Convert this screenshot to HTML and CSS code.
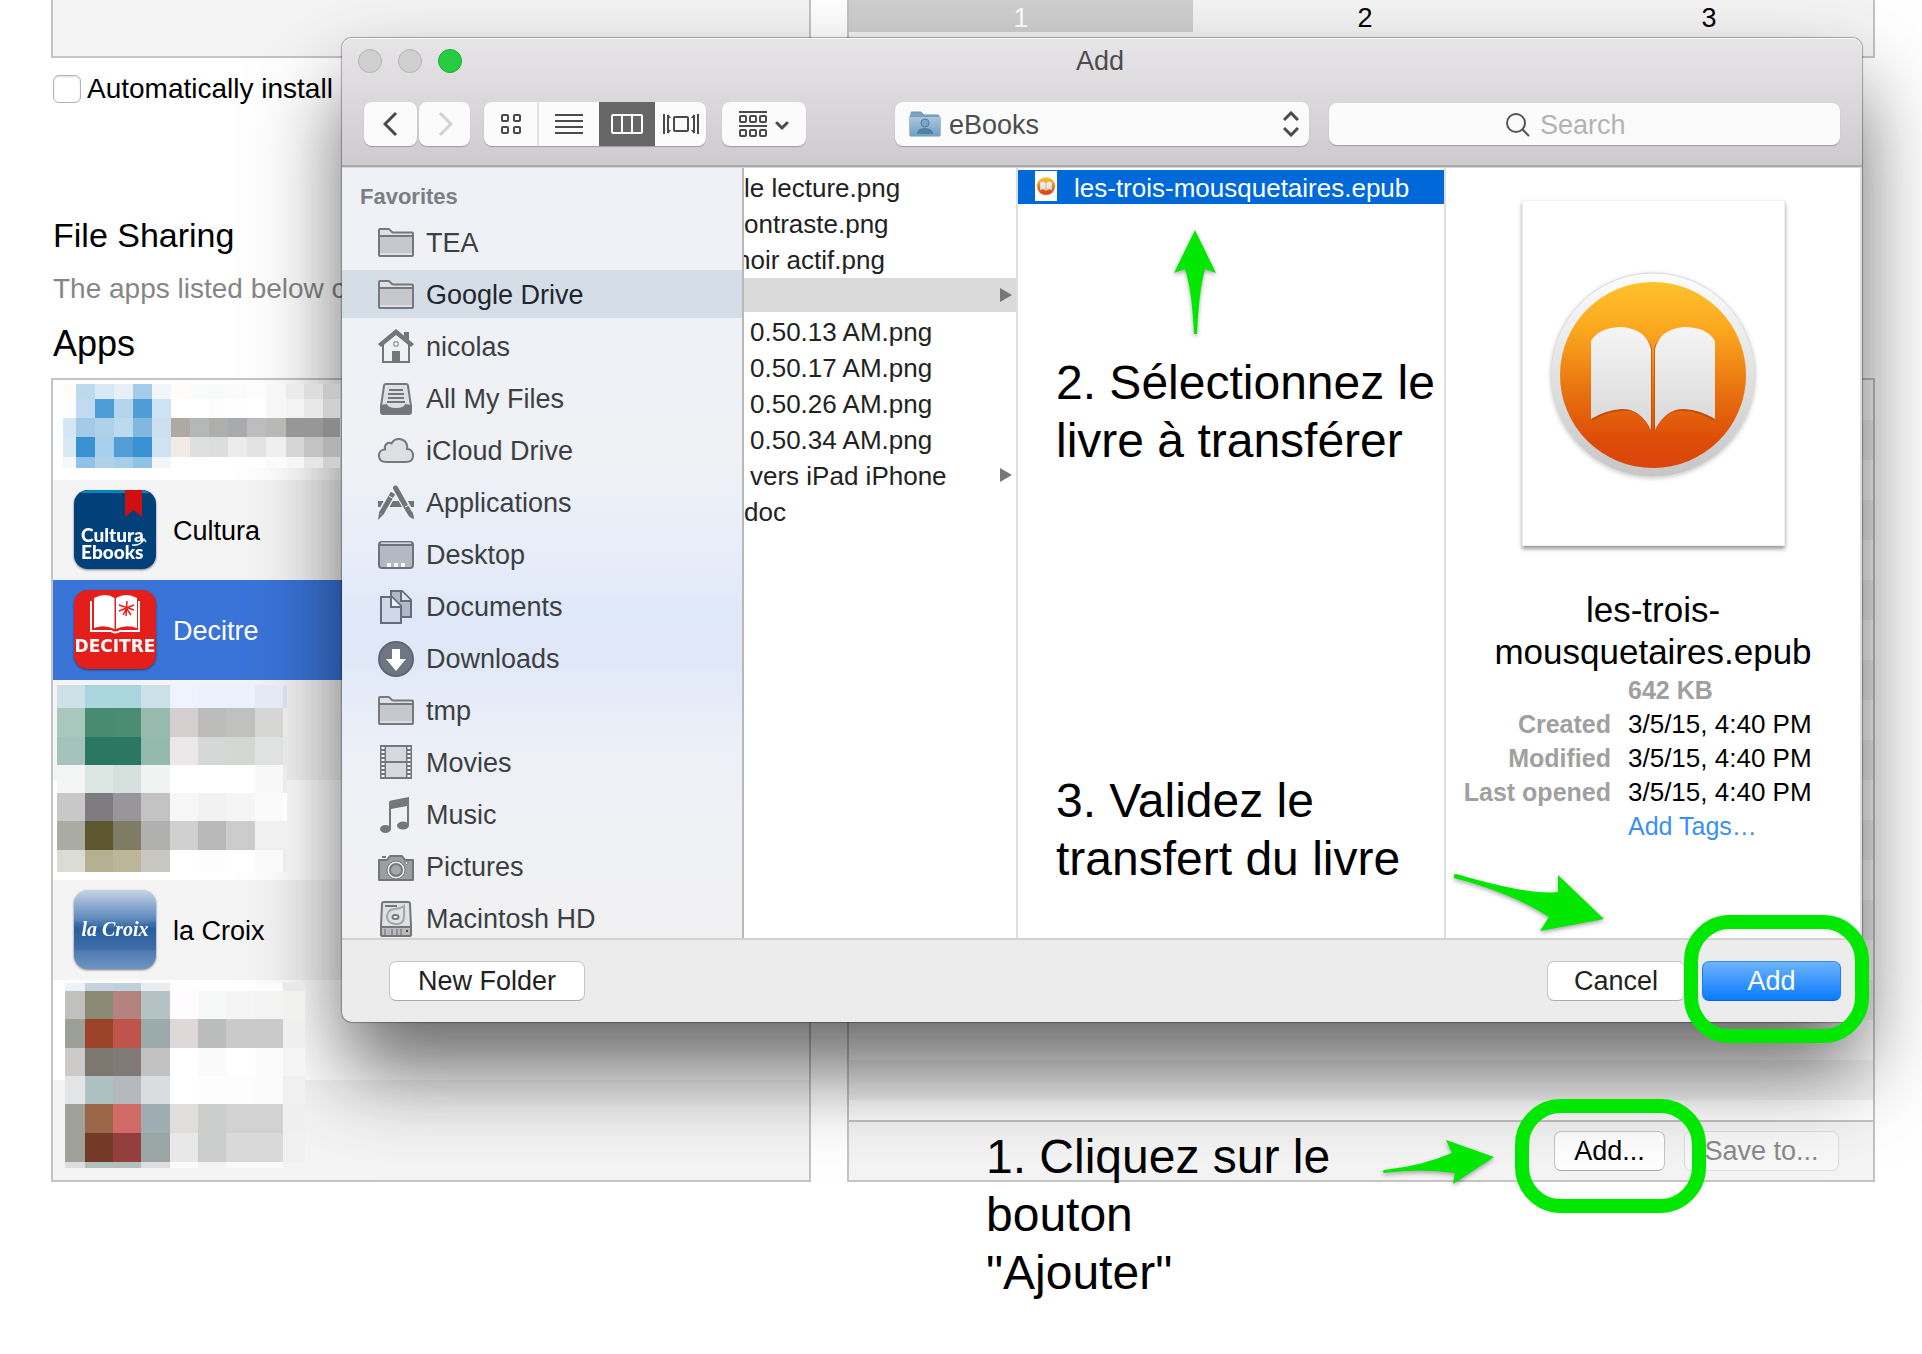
FILE: index.html
```html
<!DOCTYPE html>
<html lang="fr">
<head>
<meta charset="utf-8">
<title>Add</title>
<link rel="stylesheet" href="styles.css">
</head>
<body>
<svg class="defs" aria-hidden="true">
  <defs>
    <linearGradient id="orange" x1="0" y1="0" x2="0" y2="1"><stop offset="0" stop-color="#ffc22c"/><stop offset=".25" stop-color="#fba81f"/><stop offset=".6" stop-color="#e8700f"/><stop offset=".85" stop-color="#dd4c08"/><stop offset="1" stop-color="#db450b"/></linearGradient>
    <linearGradient id="rim" x1="0" y1="0" x2="0" y2="1"><stop offset="0" stop-color="#fdfdfd"/><stop offset="1" stop-color="#c6c6c6"/></linearGradient>
    <linearGradient id="paper" x1="0" y1="0" x2="0" y2="1"><stop offset="0" stop-color="#f5f5f5"/><stop offset="1" stop-color="#d8d8d8"/></linearGradient>
    <linearGradient id="folderblue" x1="0" y1="0" x2="0" y2="1"><stop offset="0" stop-color="#a9c6da"/><stop offset="1" stop-color="#6f9fc4"/></linearGradient>
    <linearGradient id="croix" x1="0" y1="0" x2="0" y2="1"><stop offset="0" stop-color="#c5d4e8"/><stop offset=".36" stop-color="#5f8abd"/><stop offset=".5" stop-color="#2d629f"/><stop offset=".7" stop-color="#4673ab"/><stop offset="1" stop-color="#6d95c4"/></linearGradient>
    <symbol id="book" viewBox="0 0 210 210">
      <circle cx="105" cy="105" r="102" fill="url(#rim)" stroke="#dcdcdc" stroke-width="1"/>
      <circle cx="105" cy="105" r="93" fill="url(#orange)"/>
      <g fill="#a33a06" opacity=".5"><path d="M44 73Q52 59 75 59Q98 61 104 78V162Q92 138 73 141Q58 142 44 151Z"/><path d="M166 73Q158 59 135 59Q112 61 106 78V162Q118 138 137 141Q152 142 166 151Z"/></g>
      <g fill="url(#paper)"><path d="M43 71Q51 57 74 57Q98 59 103 79V160Q92 138 73 139Q58 140 43 149Z"/><path d="M167 71Q159 57 136 57Q112 59 107 79V160Q118 138 137 139Q152 140 167 149Z"/></g>
    </symbol>
    <symbol id="folder" viewBox="0 0 36 36"><path class="line" d="M1 30V5q0-1 1-1h8.500q1 0 2 1.500T15 7.500h19q1 0 1 1V30q0 1-1 1H2q-1 0-1-1z"/><path class="face" d="M2 12h32v16H2z"/><path class="line nofill" d="M1 11h34"/></symbol>
  </defs>
</svg>

<main class="page">
  <div class="columns top">
    <section class="box apps-top"></section>
    <section class="box screens"><span class="current">1</span><span>2</span><span>3</span></section>
  </div>
  <label class="auto"><input type="checkbox"> Automatically install</label>
  <h1 class="title">File Sharing</h1>
  <p class="hint">The apps listed below can</p>
  <h2 class="subtitle">Apps</h2>

  <div class="columns">
    <section class="box">
      <ul class="apps">
        <li></li>
        <li>
          <svg class="appicon" viewBox="0 0 82 79"><rect width="82" height="79" rx="14" fill="#02407a"/><path d="M6 3Q10 0 16 0H66Q72 0 76 3Z" fill="#0a86b5"/><path d="M51 0h17v27l-8.500-7L51 27z" fill="#d01010"/><text class="cultura" x="7" y="52">Cultura</text><text class="cultura" x="7" y="69">Ebooks</text><path d="M58 55q9 1 12-6m-4 1l4-1 2 3" fill="none" stroke="#e8edf5" stroke-width="1.500"/></svg>
          <span>Cultura</span>
        </li>
        <li class="selected">
          <svg class="appicon" viewBox="0 0 82 79"><rect width="82" height="79" rx="14" fill="#e41e1b"/><path d="M17 11V41H37q4 3 9 0H65V11" fill="none" stroke="#fff" stroke-width="2"/><path d="M20 8Q32 2 40.500 8V39Q30 34 20 38ZM42 8Q52 2 63 8V38Q52 34 42 39Z" fill="#fff"/><path d="M53 11l-1 15M45 15l15 5M60 15l-15 6M49 25l4-7M57 25l-5-7" stroke="#e41e1b" stroke-width="1.500"/><text class="decitre" x="41" y="62">DECITRE</text></svg>
          <span>Decitre</span>
        </li>
        <li></li>
        <li></li>
        <li>
          <svg class="appicon" viewBox="0 0 82 79"><rect width="82" height="79" rx="14" fill="url(#croix)"/><path d="M0 31Q41 44 82 31V60H0Z" fill="#1d559b" opacity=".25"/><text class="croix" x="41" y="46">la Croix</text></svg>
          <span>la Croix</span>
        </li>
        <li></li>
        <li></li>
      </ul>
      <svg class="mosaic first" width="277" height="84" data-mosaic="first"></svg>
      <svg class="mosaic second" width="230" height="187" data-mosaic="second"></svg>
      <svg class="mosaic third" width="240" height="185" data-mosaic="third"></svg>
    </section>
    <section class="box documents">
      <div class="stripes"></div>
      <div class="actions"><button class="btn add-doc">Add...</button><button class="btn save" disabled>Save to...</button></div>
    </section>
  </div>
</main>

<section class="dialog" role="dialog" aria-label="Add">
  <header class="head">
    <div class="titlebar"><div class="lights"><i></i><i></i><i class="green"></i></div><span>Add</span></div>
    <div class="toolbar">
      <button class="tool back" aria-label="Back"><svg width="16" height="26"><path d="M13 2L2 13l11 11" stroke="#484848" stroke-width="3"/></svg></button>
      <button class="tool forward" aria-label="Forward"><svg width="16" height="26"><path d="M3 2l11 11L3 24" stroke="#d2d2d2" stroke-width="3"/></svg></button>
      <div class="views">
        <button aria-label="Icons"><svg width="20" height="20"><g stroke="#4a4a4a" stroke-width="2"><rect x="1" y="1" width="6" height="6" rx="1"/><rect x="13" y="1" width="6" height="6" rx="1"/><rect x="1" y="13" width="6" height="6" rx="1"/><rect x="13" y="13" width="6" height="6" rx="1"/></g></svg></button>
        <button class="list" aria-label="List"><svg width="28" height="20"><path d="M0 1h28M0 7h28M0 13h28M0 19h28" stroke="#4a4a4a" stroke-width="2"/></svg></button>
        <button class="on" aria-label="Columns"><svg width="32" height="20"><path d="M1 2q0-1 1-1h28q1 0 1 1v16q0 1-1 1H2q-1 0-1-1zM11 1v18M21 1v18" stroke="#fff" stroke-width="2"/></svg></button>
        <button class="flow" aria-label="Cover Flow"><svg width="36" height="20"><rect x="11" y="3" width="14" height="14" rx="1" stroke="#4a4a4a" stroke-width="2"/><path d="M1 0v20M5 1v18M31 1v18M35 0v20" stroke="#4a4a4a" stroke-width="2"/><path d="M5 0l3 4H5zM5 20l3-4H5zM31 0l-3 4h3zM31 20l-3-4h3z" fill="#4a4a4a"/></svg></button>
      </div>
      <button class="tool arrange" aria-label="Arrange"><svg width="50" height="26"><path d="M0 1h28M0 15h28" stroke="#4a4a4a" stroke-width="2"/><g stroke="#4a4a4a" stroke-width="2"><rect x="1" y="5" width="6" height="6" rx="1"/><rect x="11" y="5" width="6" height="6" rx="1"/><rect x="21" y="5" width="6" height="6" rx="1"/><rect x="1" y="19" width="6" height="6" rx="1"/><rect x="11" y="19" width="6" height="6" rx="1"/><rect x="21" y="19" width="6" height="6" rx="1"/></g><path d="M38 12l5 5 5-5" stroke="#4a4a4a" stroke-width="3" stroke-linecap="round"/></svg></button>
      <div class="popup">
        <svg class="popfolder" width="32" height="26"><path d="M1 25V5H2V2q0-1 1-1h9l3 3h14q1 0 1 2h1v19z" fill="#7ba3c0" stroke="#6b93b1"/><path d="M0 6h32l-1 19H1z" fill="url(#folderblue)"/><circle cx="16" cy="12" r="4" fill="#7ba6c6" stroke="#4e7da2"/><path d="M8 23q0-6 8-6t8 6z" fill="#4f80a6"/></svg>
        <select aria-label="Location"><option>eBooks</option></select>
        <svg class="updown" width="16" height="26"><path d="M1 9l7-7 7 7M1 17l7 7 7-7" stroke="#4a4a4a" stroke-width="3"/></svg>
      </div>
      <label class="search"><svg width="24" height="24"><circle cx="10" cy="10" r="9" stroke="#555" stroke-width="2"/><path d="M16 16l7 7" stroke="#555" stroke-width="2"/></svg><input type="search" placeholder="Search" aria-label="Search"></label>
    </div>
  </header>

  <div class="browser">
    <nav class="sidebar">
      <h3>Favorites</h3>
      <ul>
        <li><svg class="ico"><use href="#folder"/></svg>TEA</li>
        <li class="current"><svg class="ico"><use href="#folder"/></svg>Google Drive</li>
        <li><svg class="ico"><path d="M5 15L18 3l13 12v18H5z" fill="#eff0f4" stroke="#747679" stroke-width="2"/><path d="M26 3h5v9h-5zM14 22h8v12h-8z" fill="#747679"/><path d="M0 15L18 0l18 15-3 3L18 6 3 18z" fill="#747679"/><path d="M16 13h4v4h-4z" fill="#fff" stroke="#747679"/></svg>nicolas</li>
        <li><svg class="ico"><path class="line" d="M8 3h20q2 0 2 2l3 20v6q0 2-2 2H5q-2 0-2-2v-6L6 5q0-2 2-2z"/><path d="M3 24l6-1q1 4 9 4t9-4l6 1v7q0 2-2 2H5q-2 0-2-2z" fill="#747679"/><path d="M11 9h14M10 13h16M10 17h16M9 21h18" stroke="#747679" stroke-width="2"/></svg>All My Files</li>
        <li><svg class="ico"><path class="line" d="M8 29C3 29 1 26 1 22.500c0-4 3-6 6-6-1-5 3-8 6.500-6C16 6 18.500 6 21 6c6 0 9 5 8 10 4 0 6 3 6 6.500S33 29 28 29z"/></svg>iCloud Drive</li>
        <li><svg class="ico"><path d="M0 16h8l-3 6H0zM14 16h9l3 6H11zM29 16h7v6h-4z" fill="#70757b"/><path d="M18 2L2 31" stroke="#f0f1f6" stroke-width="8"/><path d="M15 8L3 29" stroke="#70757b" stroke-width="5"/><path d="M1 28l4 2-5 5z" fill="#70757b"/><path d="M18 3l15 27" stroke="#f0f1f6" stroke-width="8"/><path d="M17.500 3l13 23" stroke="#70757b" stroke-width="5" stroke-linecap="round"/><path d="M29 28l5-2q2 4 2 8-5-1-7-6z" fill="#70757b"/><path d="M11 11l5 3M27 22l4-2" stroke="#f0f1f6"/></svg>Applications</li>
        <li><svg class="ico"><rect x="1" y="5" width="34" height="26" rx="3" fill="#b3b8c3" stroke="#6b717d" stroke-width="2"/><path d="M2 8h32" stroke="#6b717d" stroke-width="2"/><path d="M3 6h30" stroke="#eef1f8" stroke-width="1"/><path d="M9 26h4v4H9zM16 26h4v4h-4zM23 26h4v4h-4z" fill="#f4f6fb"/></svg>Desktop</li>
        <li><svg class="ico"><path d="M13 2h11l9 9v17H13z" fill="#b1b8c7" stroke="#656d7c" stroke-width="2"/><path d="M23 2v10h10" fill="#dde4f2" stroke="#656d7c" stroke-width="2"/><path d="M3 8h11l9 9v17H3z" fill="#d0d8e8" stroke="#656d7c" stroke-width="2"/><path d="M13 8v10h10" fill="#eef2fa" stroke="#656d7c" stroke-width="2"/></svg>Documents</li>
        <li><svg class="ico"><circle cx="18" cy="18" r="17" fill="#6e7583" stroke="#5f6776" stroke-width="2"/><path d="M14 8h8v10h6L18 30 8 18h6z" fill="#fff"/></svg>Downloads</li>
        <li><svg class="ico"><use href="#folder"/></svg>tmp</li>
        <li><svg class="ico"><path d="M2 0h32v34H2z" fill="#74777c"/><path d="M8 2h20v14H8zM8 18h20v14H8z" fill="#d6d9de"/><path d="M5 2v32M31 2v32" stroke="#f2f4f8" stroke-width="3" stroke-dasharray="2 2"/></svg>Movies</li>
        <li><svg class="ico"><path d="M11 5Q11 4 13 3.500L31 0V28H29V9L13 12V32H11Z" fill="#747679"/><ellipse cx="7.500" cy="32" rx="5.500" ry="4" fill="#747679"/><ellipse cx="25" cy="28.500" rx="6" ry="4" fill="#747679"/></svg>Music</li>
        <li><svg class="ico"><path d="M1 11h8l3-4h12l3 4h8v20H1z" fill="#9c9ea1" stroke="#747679" stroke-width="2" stroke-linejoin="round"/><path d="M4 8h4" stroke="#747679" stroke-width="2"/><circle cx="18" cy="21" r="9" fill="#eee" stroke="#747679" stroke-width="1"/><circle cx="18" cy="21" r="6" fill="#a5a6a8" stroke="#747679" stroke-width="2"/><circle cx="28.500" cy="14" r="1.500" fill="#eee" stroke="#747679"/></svg>Pictures</li>
        <li><svg class="ico"><path d="M6 1h24q2 0 2 2l1 22v8q0 2-2 2H5q-2 0-2-2v-8L4 3q0-2 2-2z" fill="#e0e1e2" stroke="#747679" stroke-width="2"/><path d="M3 26h30v7q0 2-2 2H5q-2 0-2-2z" fill="#b9babc" stroke="#747679" stroke-width="2"/><path d="M7 5h12" stroke="#747679" stroke-width="2"/><path d="M7 28v6M14 28v6M19 28v6M23 28v6" stroke="#8d8f92" stroke-width="2"/><path d="M26 5v10q0 9-9 8-8-1-8-8 1-7 8-7 5 0 9-3z" fill="none" stroke="#a5a6a8" stroke-width="2"/><ellipse cx="17.500" cy="16" rx="3" ry="2" fill="#fff" stroke="#747679" stroke-width="2"/><path d="M28 30h2" stroke="#444" stroke-width="2"/></svg>Macintosh HD</li>
      </ul>
    </nav>
    <ul class="files">
      <li>le lecture.png</li>
      <li>ontraste.png</li>
      <li class="cut">noir actif.png</li>
      <li class="open"><i class="more"></i></li>
      <li class="inset">0.50.13 AM.png</li>
      <li class="inset">0.50.17 AM.png</li>
      <li class="inset">0.50.26 AM.png</li>
      <li class="inset">0.50.34 AM.png</li>
      <li class="inset">vers iPad iPhone<i class="more"></i></li>
      <li>doc</li>
    </ul>
    <ul class="files books">
      <li class="picked"><span class="thumb"><svg width="20" height="20"><use href="#book"/></svg></span>les-trois-mousquetaires.epub</li>
    </ul>
    <section class="preview">
      <div class="cover"><svg width="210" height="210"><use href="#book"/></svg></div>
      <h3>les-trois-mousquetaires.epub</h3>
      <dl>
        <dt></dt><dd class="size">642 KB</dd>
        <dt>Created</dt><dd>3/5/15, 4:40 PM</dd>
        <dt>Modified</dt><dd>3/5/15, 4:40 PM</dd>
        <dt>Last opened</dt><dd>3/5/15, 4:40 PM</dd>
        <dt></dt><dd><a href="#tags">Add Tags…</a></dd>
      </dl>
    </section>
  </div>

  <footer class="foot">
    <button class="btn new">New Folder</button>
    <button class="btn cancel">Cancel</button>
    <button class="btn primary">Add</button>
  </footer>
</section>

<p class="note note-select">2. Sélectionnez le<br>livre à transférer</p>
<p class="note note-confirm">3. Validez le<br>transfert du livre</p>
<p class="note note-click">1. Cliquez sur le<br>bouton<br>"Ajouter"</p>
<svg class="arrow arrow-select" width="44" height="106"><path d="M22 0L43 43L32 39Q26 60 24 104H21Q19 60 12 39L1 43Z"/></svg>
<svg class="arrow arrow-confirm" width="154" height="60"><path d="M4 0Q80 22 106 18V1L152 45L88 57L97 43Q60 19 2 4Q1 0 4 0Z"/></svg>
<svg class="arrow arrow-click" width="114" height="46"><path d="M2 30Q40 26 70 13L64 0L112 17L71 44L73 33Q40 28 2 33Q0 32 2 30Z"/></svg>
<div class="ring ring-confirm"></div>
<div class="ring ring-click"></div>
<script src="mosaic.js"></script>
</body>
</html>
```
FILE: styles.css
```css
* { box-sizing: border-box; }
body {
  margin: 0;
  position: relative;
  min-height: 100vh;
  background: #fff;
  color: #000;
  font: 27px/32px "Liberation Sans", Arial, sans-serif;
}
ul, dl, dd, p, h1, h2, h3 { margin: 0; padding: 0; list-style: none; font-weight: normal; }
button, input, select { font: inherit; color: inherit; margin: 0; padding: 0; border: 0; background: none; }
svg { display: block; flex: none; fill: none; }
.defs { position: absolute; width: 0; height: 0; }

/* iTunes page */
.page { padding: 0 47px 0 51px; overflow: hidden; }
.columns { display: grid; grid-template-columns: 760fr 1028fr; gap: 36px; }
.box { position: relative; border: 2px solid #c4c4c4; min-width: 0; }
.top .box { height: 58px; border-top: 0; background: #f4f4f4; }
.screens { display: flex; overflow: hidden; }
.screens span { flex: 0 0 344px; height: 32px; line-height: 36px; text-align: center; }
.screens .current { background: #cfcfcf; color: #fff; }
.auto, .title, .hint, .subtitle { padding-left: 2px; }
.auto { display: flex; align-items: center; gap: 6px; margin-top: 15px; font-size: 28px; }
.auto input {
  appearance: none;
  width: 28px; height: 28px;
  border: 1px solid #b4b4b4; border-radius: 6px;
  background: #fff;
  box-shadow: inset 0 1px 2px #ddd;
}
.title { margin-top: 110px; font-size: 34px; line-height: 40px; }
.hint { margin-top: 18px; font-size: 28px; color: #868686; white-space: nowrap; }
.subtitle { margin: 19px 0 14px; font-size: 36px; line-height: 40px; }

.apps li {
  display: flex; align-items: center; gap: 17px;
  height: 100px; padding: 0 0 1px 21px;
}
.apps li:nth-child(even) { background: #f4f4f4; }
.apps .selected { background: #3a74d8; color: #fff; }
.apps span { padding-top: 3px; }
.appicon { width: 82px; height: 79px; filter: drop-shadow(0 1px 1px rgba(0, 0, 0, .5)); }
.cultura { font: 900 19px Lato, sans-serif; fill: #fff; }
.decitre { font: bold 17px "DejaVu Sans", sans-serif; fill: #fff; text-anchor: middle; }
.croix { font: italic bold 20px "Liberation Serif", serif; fill: #fff; text-anchor: middle; }
.mosaic { position: absolute; z-index: 3; shape-rendering: crispEdges; }
.first { left: 10px; top: 4px; }
.second { left: 4px; top: 305px; }
.third { left: 12px; top: 603px; }

.documents { display: flex; flex-direction: column; }
.stripes { flex: 1; background: repeating-linear-gradient(#fff 0 40px, #f4f4f4 40px 80px); }
.actions {
  display: flex; justify-content: flex-end; gap: 19px;
  padding: 9px 34px;
  border-top: 2px solid #c4c4c4;
  background: #f4f4f4;
}
.btn {
  height: 40px;
  border: 1px solid #c6c6c6; border-bottom-color: #acacac; border-radius: 7px;
  background: #fff;
  white-space: nowrap;
}
.add-doc { width: 111px; }
.save { width: 155px; color: #8a8a8a; background: #f8f8f8; border-color: #dcdcdc; }

/* File dialog */
.dialog {
  position: absolute; z-index: 2;
  top: 38px; left: 342px; right: 60px;
  border-radius: 10px;
  background: #ececec;
  box-shadow: 0 0 1px 1px rgba(0, 0, 0, .3), 0 48px 90px rgba(0, 0, 0, .52), 0 60px 60px -20px rgba(0, 0, 0, .15);
}
.head {
  padding: 7px 22px 19px;
  border-radius: 10px 10px 0 0;
  border-bottom: 2px solid #ababab;
  box-shadow: inset 0 1px #f6f6f6, 0 1px #d6d6d6;
  background: linear-gradient(#e7e5e8, #cdcbcd);
  margin-bottom: 1px;
}
.titlebar { display: grid; grid-template-columns: 1fr auto 1fr; align-items: center; color: #4d4d4d; margin: 0 -6px; }
.titlebar span { margin-right: 4px; }
.lights { display: flex; gap: 16px; }
.lights i { width: 24px; height: 24px; border: 1px solid #b4b4b4; border-radius: 50%; background: #d0d0d0; }
.lights .green { background: #28cc41; border-color: #1cb032; }
.toolbar { display: flex; margin-top: 25px; height: 44px; }
.toolbar button { display: flex; flex: none; align-items: center; justify-content: center; }
.tool, .views, .popup, .search {
  border-radius: 8px;
  background: #fbfbfb;
  box-shadow: 0 1px 1px rgba(0, 0, 0, .25);
}
.back { width: 53px; margin-right: 2px; }
.forward { width: 51px; margin-right: 14px; }
.views { display: flex; flex: none; overflow: hidden; width: 222px; }
.views button { width: 55px; border-right: 2px solid #e2e2e2; }
.views .list { width: 60px; border: 0; }
.views .on { width: 56px; background: #666; border: 0; }
.views .flow { width: 51px; border: 0; }
.arrange { width: 84px; margin: 0 89px 0 16px; }
.popup { position: relative; flex: 1 1 414px; min-width: 0; margin-right: 20px; color: #4d4d4d; }
.popup select { appearance: none; width: 100%; height: 44px; padding: 2px 0 0 54px; }
.popfolder { position: absolute; left: 14px; top: 9px; }
.updown { position: absolute; right: 10px; top: 9px; }
.search { flex: 1 1 511px; min-width: 0; display: flex; align-items: center; gap: 10px; height: 42px; margin-top: 1px; padding: 2px 0 0 177px; }
.search input { flex: 1; min-width: 0; outline: 0; appearance: none; }
.search input::placeholder { color: #b3b3b3; opacity: 1; }

.browser {
  display: grid;
  grid-template-columns: 402px 274px 428px 1fr;
  height: 770px;
  overflow: hidden;
  background: #fff;
  border-right: 2px solid #dedede;
}
.sidebar {
  overflow: hidden;
  padding-top: 16px;
  border-right: 2px solid #b8b8b8;
  color: #3c4043;
  background: linear-gradient(#f0f1f6 0, #eff1f5 290px, #e8edf8 380px, #dfe8f8 450px, #e0e8f8 490px, #ebeff7 570px, #f0f1f5 640px, #f1f1f2 100%);
}
.sidebar h3 { padding-left: 18px; margin-bottom: 8px; font-size: 22px; line-height: 26px; font-weight: bold; color: #7b7e83; }
.sidebar li { display: flex; align-items: center; gap: 12px; height: 48px; margin-bottom: 4px; padding: 2px 0 0 36px; }
.sidebar .current { background: #d5dde7; color: #20272e; }
.ico { width: 36px; height: 36px; }
.line { fill: #dfe0e4; stroke: #75787e; stroke-width: 2; }
.nofill { fill: none; }
.face { fill: #c6c8cc; }
.files { padding-top: 2px; overflow: hidden; border-right: 2px solid #dedede; font-size: 26px; color: #222; }
.files li { display: flex; align-items: center; height: 34px; margin-bottom: 2px; padding-top: 2px; white-space: nowrap; }
.files .cut { margin-left: -8px; }
.files .inset { padding-left: 6px; }
.files .open { background: #dadada; }
.more { margin-left: auto; margin-right: 4px; margin-bottom: 2px; border: 7px solid transparent; border-left: 12px solid #777; border-right: 0; }
.files .picked { padding-left: 17px; background: #0069d9; color: #fff; }
.thumb { display: flex; align-items: center; justify-content: center; width: 22px; height: 30px; margin: 0 17px 4px 0; background: #fff; }
.preview { padding-top: 32px; }
.cover {
  display: flex; align-items: center; justify-content: center;
  width: 263px; height: 346px;
  margin: 0 auto 43px;
  padding-top: 3px;
  border: 1px solid #f0f0f0;
  background: #fff;
  box-shadow: 0 3px 4px rgba(0, 0, 0, .4);
}
.cover svg { filter: drop-shadow(0 1px 2px rgba(0, 0, 0, .2)); }
.preview h3 { padding: 0 40px; font-size: 35px; line-height: 42px; text-align: center; }
.preview dl { display: grid; grid-template-columns: 165px 1fr; column-gap: 17px; font-size: 26px; line-height: 34px; }
.preview dt, .preview .size { font-size: 25px; font-weight: bold; color: #a0a0a0; }
.preview dt { text-align: right; }
.preview a { color: #3b90f8; font-size: 25px; text-decoration: none; }

.foot { display: flex; padding: 21px 21px 21px 47px; border-top: 2px solid #d2d2d2; height: 84px; color: #222; }
.new { width: 196px; margin-right: auto; }
.cancel { width: 138px; margin-right: 17px; }
.primary { width: 139px; color: #fff; border-color: #3a8df0 #1a7cf4 #0a60e0; background: linear-gradient(#6db3fa, #0a7bff); }

/* Tutorial annotations */
.note { position: absolute; z-index: 4; font-size: 48px; line-height: 58px; white-space: nowrap; }
.note-select { left: 1056px; top: 354px; }
.note-confirm { left: 1056px; top: 772px; }
.note-click { left: 986px; top: 1128px; }
.arrow { position: absolute; z-index: 4; fill: #00e800; overflow: visible; filter: drop-shadow(0 2px 2px rgba(0, 0, 0, .35)); }
.arrow-select { left: 1173px; top: 230px; }
.arrow-confirm { left: 1452px; top: 874px; }
.arrow-click { left: 1382px; top: 1140px; }
.ring { position: absolute; z-index: 5; border: 14px solid #00e800; border-radius: 46px; }
.ring-confirm { left: 1684px; top: 915px; width: 185px; height: 128px; }
.ring-click { left: 1515px; top: 1099px; width: 191px; height: 114px; }
```
FILE: mosaic.js
```js
// Pixelated areas: column edges, row edges, then one line of colours per row.
const mosaics = {
  first: {
    x: [0, 13, 32, 51, 70, 89, 108, 127, 146, 165, 184, 203, 223, 241, 260, 277],
    y: [0, 15, 34, 53, 73, 84],
    rows: [
      "fffcf8 bbdaee d6e8f4 e7eff7 a4cbe9 f1f6fa fefdfa f9fcfb f9fafa fafbfa fdfdfd f7f7f7 ebebeb dddddd c8c8c8",
      "fbfefd c0dbf1 4e9dd6 b4d5ee 4e9dd6 cde2f2 ffffff ffffff fdfdfd fefefe ffffff f7f7f7 f3f3f3 e8e8e8 cfcfcf",
      "d2e6f3 a4cae8 b0d1ea bbdaee 82b7e0 cae0f0 afa9a4 b5b8b7 aeaeac a9aaad bdbdbd b8b8b6 979797 979797 8b8b8b",
      "d8e9f3 3a91d1 a8d0eb 519ed7 3a91d1 cee2f1 f1ebe8 dee0e0 dcdddd ececec e3e3e3 efefef d6d6d6 c3c3c3 b3b3b3",
      "f4f8fa 8fc2e6 b2d1ea a5cfe9 8fc3e6 f2f7fa ffffff ffffff ffffff ffffff fefefe fbfbfb f6f6f6 e6e6e6 d0d0d0"
    ]
  },
  second: {
    x: [0, 28, 56, 84, 113, 141, 169, 198, 226, 230],
    y: [0, 23, 52, 80, 108, 136, 165, 187],
    rows: [
      "cde0e8 aad5de aad5de cbe0e8 eef3fd ecf1fb ecf1fb e5e9f3 d6dce8",
      "a9c7bd 488a72 4b8c74 98bbb0 d5cfd0 bcbdbb c0c0be d6d6d4 e9e9e9",
      "a5c3ba 2a7861 2a7861 94b9ad ece8e9 d6d8d7 d5d7d5 e0e1e1 e6e6e6",
      "f3f6f4 dce7e3 d6e0dc eff3f1 ffffff ffffff ffffff f8f8f8 ebebeb",
      "c8c8c8 7f7c81 98959b c3c3c3 f7f7f7 f2f2f2 f5f5f5 fafafa ffffff",
      "aaaba3 5c572f 7e7c64 b0b0af d0d0d0 b9b9b9 cccccc f0f0f0 f0f0f0",
      "dcdcd6 b6b092 bcb699 c8c6c1 ffffff fdfdfd ffffff fafafa ececec"
    ]
  },
  third: {
    x: [0, 20, 48, 76, 105, 133, 161, 190, 218, 240],
    y: [0, 8, 36, 65, 93, 121, 150, 179, 185],
    rows: [
      "eef2f7 c5d1e1 bdd0dc ebecf1 ffffff ffffff ffffff fbfbfb e9e9e9",
      "c0c0be 8b8b75 b48380 b4c2c3 fefcff f7f9f8 f5f5f5 f3f3f3 f1f1ee",
      "9da097 9c442a bf544d 9aaaad ded9d8 babdbb cacaca cacaca efefef",
      "cccbc9 7d776f 7f7a77 c2c2c2 ffffff fafafa ffffff fbfbfb f5f5f5",
      "e3e4e5 adc1c2 b5b9be dadde0 ffffff fdfdfd fdfdfd fbfbfb f0f0f0",
      "a0a199 9b6547 d26a67 9dadb1 dfdedb cbcdcc d2d2d2 d2d2d2 efefef",
      "a0a199 743a28 923f3d 9aa6a5 e8e8e8 cbcdcc d9d9d9 d9d9d9 f0f0f0",
      "dedede b4c0be b4bfbd dedede fcfcfc f3f3f3 fafafa fafafa f3f3f3"
    ]
  }
};

document.querySelectorAll("[data-mosaic]").forEach((svg) => {
  const { x, y, rows } = mosaics[svg.dataset.mosaic];
  rows.forEach((row, r) => row.split(" ").forEach((color, c) => {
    const cell = document.createElementNS("http://www.w3.org/2000/svg", "rect");
    cell.setAttribute("x", x[c]);
    cell.setAttribute("y", y[r]);
    cell.setAttribute("width", x[c + 1] - x[c]);
    cell.setAttribute("height", y[r + 1] - y[r]);
    cell.setAttribute("fill", "#" + color);
    svg.append(cell);
  }));
});
```
